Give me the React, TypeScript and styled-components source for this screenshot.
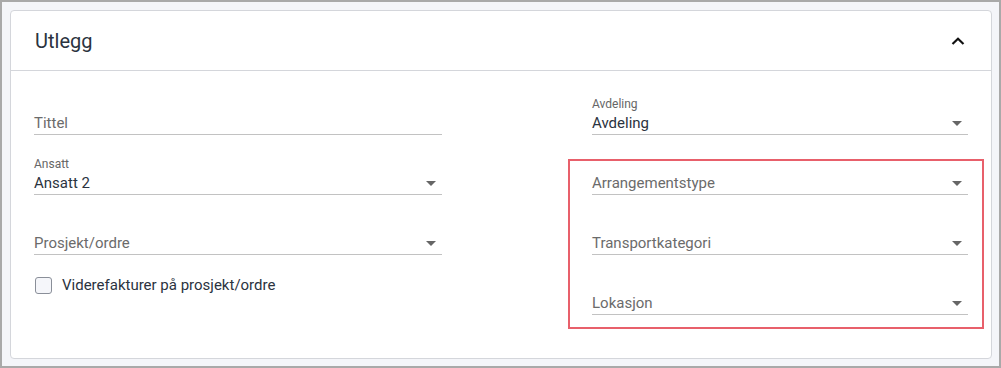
import React from 'react';
import styled, { createGlobalStyle } from 'styled-components';

const GlobalStyle = createGlobalStyle`
  * { box-sizing: border-box; }
  body {
    margin: 0;
    font-family: Roboto, "Liberation Sans", Arial, sans-serif;
    background: #f4f5f9;
  }
`;

const Frame = styled.div`
  width: 1001px;
  height: 368px;
  border: 2px solid #a9a9a9;
  padding: 8px 7px 7px 8px;
  background: #f4f5f9;
`;

const Card = styled.section`
  height: 100%;
  background: #fff;
  border: 1px solid #d4d6db;
  border-radius: 4px;
`;

const Header = styled.header`
  height: 60px;
  display: flex;
  align-items: center;
  justify-content: space-between;
  padding: 0 26px 0 24px;
  border-bottom: 1px solid #d4d6db;
`;

const Title = styled.h2`
  margin: 0;
  font-size: 20px;
  font-weight: 400;
  color: #2b3340;
`;

const Body = styled.div`
  display: grid;
  grid-template-columns: 408px 376px;
  justify-content: space-between;
  padding: 25px 23px 0 23px;
`;

const Column = styled.div`
  display: flex;
  flex-direction: column;
  gap: 21px;
`;

const Highlight = styled.div`
  position: relative;
  display: flex;
  flex-direction: column;
  gap: 21px;

  &::after {
    content: '';
    position: absolute;
    top: 3px;
    left: -24px;
    right: -16px;
    bottom: -14px;
    border: 2px solid #e8606b;
    pointer-events: none;
  }
`;

const FieldBox = styled.div`
  height: 39px;
  display: flex;
  flex-direction: column;
  border-bottom: 1px solid #c2c2c2;
`;

const SmallLabel = styled.span`
  height: 16px;
  line-height: 16px;
  font-size: 12px;
  color: #666;
`;

const ValueRow = styled.div<{ $placeholder?: boolean }>`
  height: 22px;
  display: flex;
  align-items: center;
  justify-content: space-between;
  padding-right: 6px;
  font-size: 15px;
  color: ${(p) => (p.$placeholder ? '#6b6b6b' : '#2b3340')};
`;

const Caret = styled.span`
  width: 0;
  height: 0;
  border-left: 5px solid transparent;
  border-right: 5px solid transparent;
  border-top: 5px solid #666;
`;

const CheckRow = styled.label`
  display: flex;
  align-items: center;
  gap: 10px;
  padding-left: 1px;
  font-size: 15px;
  color: #2b3340;
`;

const Box = styled.span`
  width: 17px;
  height: 17px;
  border: 1px solid #8a8f99;
  border-radius: 3px;
  background: #f5f6fa;
`;

type FieldProps = { label?: string; value?: string; placeholder?: string; select?: boolean };

function Field({ label, value, placeholder, select }: FieldProps) {
  return (
    <FieldBox>
      <SmallLabel>{value ? label : ''}</SmallLabel>
      <ValueRow $placeholder={!value}>
        <span>{value || placeholder}</span>
        {select && <Caret />}
      </ValueRow>
    </FieldBox>
  );
}

export default function App() {
  return (
    <>
      <GlobalStyle />
      <Frame>
        <Card>
          <Header>
            <Title>Utlegg</Title>
            <svg width="14" height="8" viewBox="0 0 14 8">
              <polyline points="1.5,7 7,1.8 12.5,7" fill="none" stroke="#111" strokeWidth="2.2" />
            </svg>
          </Header>
          <Body>
            <Column>
              <Field placeholder="Tittel" />
              <Field label="Ansatt" value="Ansatt 2" select />
              <Field placeholder="Prosjekt/ordre" select />
              <CheckRow>
                <Box />
                Viderefakturer på prosjekt/ordre
              </CheckRow>
            </Column>
            <Column>
              <Field label="Avdeling" value="Avdeling" select />
              <Highlight>
                <Field placeholder="Arrangementstype" select />
                <Field placeholder="Transportkategori" select />
                <Field placeholder="Lokasjon" select />
              </Highlight>
            </Column>
          </Body>
        </Card>
      </Frame>
    </>
  );
}
